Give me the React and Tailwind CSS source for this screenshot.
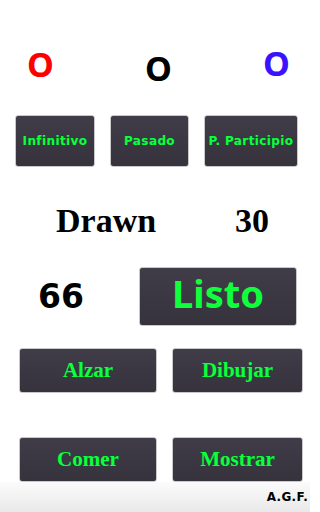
export default function App() {
  const box =
    "flex items-center justify-center rounded-[3px] border border-[#c9c9cc] bg-gradient-to-b from-[#403c48] to-[#36333d] text-[#10ff3c]";
  const small = "font-['DejaVu_Sans',sans-serif] text-[12px] font-bold tracking-[0.4px] [text-shadow:0_0_1px_#063]";
  const serif = "font-['Liberation_Serif',serif] font-bold";
  return (
    <div className="flex h-[512px] w-[310px] flex-col bg-white">
      <div className="flex h-[100px] items-start justify-between pl-[27px] pr-[20px] pt-[46px] font-['Noto_Sans',sans-serif] text-[34px] font-bold leading-none">
        <span className="mt-[1px] text-[#ff0000]">O</span>
        <span className="mt-[5px] text-black">O</span>
        <span className="mt-[0px] text-[#3a12ff]">O</span>
      </div>

      <div className="mt-[15px] flex gap-[15px] pl-[15px]">
        <div className={`${box} ${small} h-[52px] w-[80px]`}>Infinitivo</div>
        <div className={`${box} ${small} h-[52px] w-[79px]`}>Pasado</div>
        <div className={`${box} ${small} h-[52px] w-[94px]`}>P. Participio</div>
      </div>

      <div className={`${serif} mt-[37px] flex h-[34px] items-center text-[34px] leading-none text-black`}>
        <span className="ml-[56px]">Drawn</span>
        <span className="ml-[79px]">30</span>
      </div>

      <div className="mt-[29px] flex items-center">
        <span className="ml-[38px] w-[101px] font-['DejaVu_Sans',sans-serif] text-[33px] font-bold leading-none">
          66
        </span>
        <div className={`${box} h-[59px] w-[158px] font-['Noto_Sans',sans-serif] text-[38px] font-bold`}>
          <span className="mt-[-6px]">Listo</span>
        </div>
      </div>

      <div className={`${serif} mt-[22px] flex gap-[15px] pl-[19px] text-[21px]`}>
        <div className={`${box} h-[45px] w-[138px] [text-shadow:0_0_1px_#063]`}>Alzar</div>
        <div className={`${box} h-[45px] w-[131px] [text-shadow:0_0_1px_#063]`}>Dibujar</div>
      </div>

      <div className={`${serif} mt-[44px] flex gap-[15px] pl-[19px] text-[21px]`}>
        <div className={`${box} h-[45px] w-[138px] [text-shadow:0_0_1px_#063]`}>Comer</div>
        <div className={`${box} h-[45px] w-[131px] [text-shadow:0_0_1px_#063]`}>Mostrar</div>
      </div>

      <div className="flex flex-1 items-center justify-end bg-gradient-to-b from-[#fbfbfb] to-[#e9e9e9] pr-[2px]">
        <span className="font-['DejaVu_Sans',sans-serif] text-[12px] font-bold tracking-[0.3px] text-black">A.G.F.</span>
      </div>
    </div>
  );
}
